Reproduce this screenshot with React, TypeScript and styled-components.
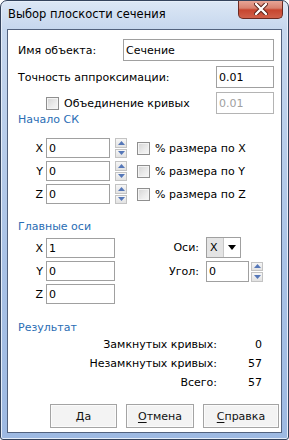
import React from 'react';
import styled, { createGlobalStyle } from 'styled-components';

const GlobalStyle = createGlobalStyle`
  html, body {
    margin: 0;
    padding: 0;
    background: #ffffff;
  }
  body {
    font-family: "DejaVu Sans", Tahoma, sans-serif;
    font-size: 11px;
    color: #000;
  }
`;

const Window = styled.div`
  width: 289px;
  height: 440px;
  box-sizing: border-box;
  border: 1px solid #34435c;
  border-radius: 7px 7px 3px 3px;
  background: linear-gradient(to bottom, #dce7f5 0px, #c6d7ee 28px, #a9c2e6 60%, #9db9e2 100%);
  box-shadow: inset 0 0 0 1px #e6eef9;
  display: flex;
  flex-direction: column;
  overflow: hidden;
`;

const TitleBar = styled.div`
  height: 28px;
  display: flex;
  align-items: flex-start;
  padding-left: 7px;
  flex-shrink: 0;
`;

const Caption = styled.div`
  font-family: "DejaVu Sans", sans-serif;
  font-size: 11.5px;
  line-height: 28px;
  color: #000;
  margin-top: -1px;
`;

const CloseButton = styled.div`
  margin-left: auto;
  margin-right: 5px;
  margin-top: -1px;
  width: 45px;
  height: 19px;
  box-sizing: border-box;
  border: 1px solid #6b2a22;
  border-top: none;
  border-radius: 0 0 5px 5px;
  background: linear-gradient(to bottom, #e9a99b 0%, #d88270 45%, #c7452f 55%, #d0604a 100%);
  display: flex;
  align-items: center;
  justify-content: center;
`;

const Client = styled.div`
  flex: 1;
  margin: 0 6px 6px 6px;
  border: 1px solid #52627e;
  background: #ffffff;
  display: flex;
  flex-direction: column;
  padding: 0 2px 4px 10px;
`;

const Row = styled.div<{ $top: number; $h?: number }>`
  display: flex;
  align-items: center;
  height: ${p => p.$h ?? 22}px;
  margin-top: ${p => p.$top}px;
  margin-right: 5px;
`;

const Label = styled.span`
  white-space: nowrap;
`;

const TextBox = styled.div<{ $w: number; $h?: number; $disabled?: boolean }>`
  width: ${p => p.$w}px;
  height: ${p => p.$h ?? 22}px;
  box-sizing: border-box;
  border: 1px solid ${p => (p.$disabled ? '#b4b4b4' : '#a0a0a0')};
  background: #fff;
  color: ${p => (p.$disabled ? '#a0a0a0' : '#000')};
  padding-left: 2px;
  display: flex;
  align-items: center;
  flex-shrink: 0;
`;

const Push = styled.div`
  margin-left: auto;
`;

const CheckBox = styled.div`
  width: 13px;
  height: 13px;
  box-sizing: border-box;
  border: 1px solid #8f8f8f;
  background: linear-gradient(135deg, #d4d4d4 0%, #ececec 60%, #f7f7f7 100%);
  box-shadow: inset 0 0 0 1px #f4f4f4;
  flex-shrink: 0;
`;

const SectionTitle = styled.div<{ $top: number }>`
  color: #2a6db4;
  line-height: 12px;
  height: 12px;
  margin-top: ${p => p.$top}px;
`;

const CoordLabel = styled.span<{ $w?: number }>`
  width: ${p => p.$w ?? 25}px;
  text-align: right;
  padding-right: 3px;
  flex-shrink: 0;
`;

const Spinner = styled.div<{ $gap: number }>`
  width: 12px;
  height: 20px;
  margin-left: ${p => p.$gap}px;
  display: flex;
  flex-direction: column;
  gap: 1px;
  flex-shrink: 0;
`;

const SpinHalf = styled.div`
  flex: 1;
  box-sizing: border-box;
  border: 1px solid #c3c3c3;
  background: linear-gradient(to bottom, #f6f6f6, #e2e2e2);
  display: flex;
  align-items: center;
  justify-content: center;
`;

const CheckLabel = styled.span`
  margin-left: 5px;
  white-space: nowrap;
`;

const AxesBlock = styled.div`
  display: flex;
  margin-top: 5px;
`;

const AxisColumn = styled.div`
  display: flex;
  flex-direction: column;
  gap: 3px;
`;

const AxisRow = styled.div`
  display: flex;
  align-items: center;
  height: 20px;
`;

const SideColumn = styled.div`
  display: flex;
  flex-direction: column;
  margin-left: 44px;
  margin-top: -1px;
  gap: 3px;
`;

const SideRow = styled.div`
  display: flex;
  align-items: center;
  height: 21px;
`;

const SideLabel = styled.span`
  width: 40px;
  text-align: right;
  padding-right: 7px;
  flex-shrink: 0;
`;

const Select = styled.div`
  width: 35px;
  height: 21px;
  box-sizing: border-box;
  border: 1px solid #a0a0a0;
  display: flex;
`;

const SelectValue = styled.div`
  width: 16px;
  background: #e4e4e4;
  display: flex;
  align-items: center;
  padding-left: 3px;
  box-sizing: border-box;
`;

const SelectButton = styled.div`
  flex: 1;
  border-left: 1px solid #c8c8c8;
  background: #fff;
  display: flex;
  align-items: center;
  justify-content: center;
`;

const ResultGrid = styled.div`
  display: grid;
  grid-template-columns: 199px 45px;
  grid-auto-rows: 19px;
  align-items: center;
  margin-top: 1px;
`;

const ResultCell = styled.span`
  text-align: right;
  white-space: nowrap;
`;

const ButtonBar = styled.div`
  margin-top: auto;
  display: flex;
  gap: 9px;
  padding-left: 32px;
`;

const Button = styled.div<{ $w: number }>`
  width: ${p => p.$w}px;
  height: 24px;
  flex-shrink: 0;
  box-sizing: border-box;
  border: 1px solid #a4a4a4;
  background: #f3f3f3;
  box-shadow: inset 0 0 0 1px #fbfbfb;
  display: flex;
  align-items: center;
  justify-content: center;
  color: #111;
  u {
    text-decoration: underline;
    text-underline-offset: 2px;
  }
`;

const Arrow = ({ up }: { up?: boolean }) => (
  <svg width="7" height="4" viewBox="0 0 7 4">
    <path d={up ? 'M0 4 L3.5 0 L7 4 Z' : 'M0 0 L7 0 L3.5 4 Z'} fill="#5577b8" />
  </svg>
);

const Spin = ({ gap }: { gap: number }) => (
  <Spinner $gap={gap}>
    <SpinHalf>
      <Arrow up />
    </SpinHalf>
    <SpinHalf>
      <Arrow />
    </SpinHalf>
  </Spinner>
);

const origin = ['X', 'Y', 'Z'];
const axes = [
  { name: 'X', value: '1' },
  { name: 'Y', value: '0' },
  { name: 'Z', value: '0' },
];

const results = [
  { label: 'Замкнутых кривых:', value: '0' },
  { label: 'Незамкнутых кривых:', value: '57' },
  { label: 'Всего:', value: '57' },
];

export default function App() {
  return (
    <>
      <GlobalStyle />
      <Window>
        <TitleBar>
          <Caption>Выбор плоскости сечения</Caption>
          <CloseButton>
            <svg width="14" height="12" viewBox="0 0 14 12">
              <path d="M2 1 L12 11 M12 1 L2 11" stroke="#5a2018" strokeWidth="4.2" strokeLinecap="round" />
              <path d="M2 1 L12 11 M12 1 L2 11" stroke="#ffffff" strokeWidth="2.4" strokeLinecap="round" />
            </svg>
          </CloseButton>
        </TitleBar>
        <Client>
          <Row $top={9}>
            <Label>Имя объекта:</Label>
            <Push />
            <TextBox $w={151}>Сечение</TextBox>
          </Row>
          <Row $top={5}>
            <Label>Точность аппроксимации:</Label>
            <Push />
            <TextBox $w={58}>0.01</TextBox>
          </Row>
          <Row $top={4}>
            <div style={{ width: 28 }} />
            <CheckBox />
            <CheckLabel>Объединение кривых</CheckLabel>
            <Push />
            <TextBox $w={58} $disabled>0.01</TextBox>
          </Row>
          <SectionTitle $top={0}>Начало СК</SectionTitle>
          {origin.map((axis, i) => (
            <Row key={axis} $top={i === 0 ? 12 : 3} $h={20}>
              <CoordLabel>{axis}</CoordLabel>
              <TextBox $w={64} $h={20}>0</TextBox>
              <Spin gap={5} />
              <div style={{ width: 10 }} />
              <CheckBox />
              <CheckLabel>% размера по {axis}</CheckLabel>
            </Row>
          ))}
          <SectionTitle $top={17}>Главные оси</SectionTitle>
          <AxesBlock>
            <AxisColumn>
              {axes.map(a => (
                <AxisRow key={a.name}>
                  <CoordLabel>{a.name}</CoordLabel>
                  <TextBox $w={69} $h={20}>{a.value}</TextBox>
                </AxisRow>
              ))}
            </AxisColumn>
            <SideColumn>
              <SideRow>
                <SideLabel>Оси:</SideLabel>
                <Select>
                  <SelectValue>X</SelectValue>
                  <SelectButton>
                    <svg width="8" height="5" viewBox="0 0 8 5">
                      <path d="M0 0 L8 0 L4 5 Z" fill="#000" />
                    </svg>
                  </SelectButton>
                </Select>
              </SideRow>
              <SideRow>
                <SideLabel>Угол:</SideLabel>
                <TextBox $w={43} $h={21}>0</TextBox>
                <Spin gap={2} />
              </SideRow>
            </SideColumn>
          </AxesBlock>
          <SectionTitle $top={18}>Результат</SectionTitle>
          <ResultGrid>
            {results.map(r => (
              <React.Fragment key={r.label}>
                <ResultCell>{r.label}</ResultCell>
                <ResultCell>{r.value}</ResultCell>
              </React.Fragment>
            ))}
          </ResultGrid>
          <ButtonBar>
            <Button $w={67}>Да</Button>
            <Button $w={68}>
              <span><u>О</u>тмена</span>
            </Button>
            <Button $w={76}>
              <span><u>С</u>правка</span>
            </Button>
          </ButtonBar>
        </Client>
      </Window>
    </>
  );
}
